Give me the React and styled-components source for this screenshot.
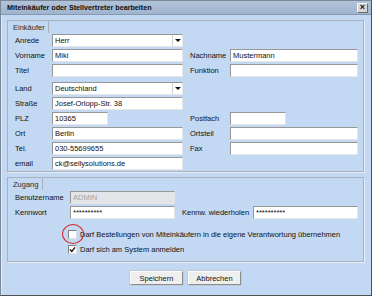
import React from 'react';
import styled, { createGlobalStyle } from 'styled-components';

const GlobalStyle = createGlobalStyle`
  html, body {
    margin: 0;
    padding: 0;
  }
  body {
    font-family: "Liberation Sans", Arial, sans-serif;
    font-size: 7.5px;
    color: #111;
  }
  * {
    box-sizing: border-box;
  }
`;

const Window = styled.div`
  width: 372px;
  height: 296px;
  display: flex;
  flex-direction: column;
  background: #c3d9f3;
  border: 1px solid #7b8796;
  border-right-color: #505050;
  border-bottom-color: #505050;
  box-shadow: inset 1px 0 0 #e2edf9;
`;

const TitleBar = styled.div`
  height: 14px;
  display: flex;
  align-items: center;
  justify-content: space-between;
  padding: 0 3px 0 6px;
  background: linear-gradient(#b1c3d9, #9fb4ce);
  border-bottom: 1px solid #8698b0;
`;

const Title = styled.span`
  font-weight: bold;
  font-size: 7.2px;
  color: #0e0e0e;
`;

const CloseBtn = styled.span`
  width: 11px;
  height: 10px;
  display: flex;
  align-items: center;
  justify-content: center;
  background: #d6d6d6;
  border: 1px solid;
  border-color: #f4f4f4 #6a6a6a #6a6a6a #f4f4f4;
  font-size: 9px;
  line-height: 1;
  font-weight: bold;
  color: #111;
`;

const Body = styled.div`
  flex: 1;
  display: flex;
  flex-direction: column;
  padding: 5px 7px 0 6px;
`;

const Group = styled.div`
  border: 1px solid #a9b2bc;
  box-shadow: 1px 1px 0 #e6eef8;
  padding: 0 5px ${p => p.$padBottom}px 7px;
  & + & {
    margin-top: 5px;
  }
`;

const Legend = styled.div`
  width: ${p => p.$w}px;
  height: 12px;
  line-height: 13px;
  margin: 0 0 1px -7px;
  padding-left: 5px;
  border-right: 1px solid #a9b2bc;
  color: #2a2a2a;
`;

const Stack = styled.div`
  display: flex;
  flex-direction: column;
  gap: 2px;
`;

const Row = styled.div`
  display: grid;
  grid-template-columns: ${p => p.$cols};
  align-items: center;
  height: 13px;
`;

const Spacer = styled.div`
  height: ${p => p.$h}px;
`;

const Label = styled.span`
  color: #111;
  white-space: nowrap;
`;

const Field = styled.input`
  width: ${p => (p.$w ? `${p.$w}px` : '100%')};
  height: 13px;
  margin: 0;
  padding: 0 2px;
  font: inherit;
  color: ${p => (p.disabled ? '#a3a3a3' : '#101010')};
  background: ${p => (p.disabled ? '#e3e5e8' : '#fff')};
  border: 1px solid;
  border-color: #979797 #e6e6e6 #e6e6e6 #979797;
  outline: none;
`;

const SelectBox = styled.div`
  width: ${p => p.$w}px;
  height: 13px;
  display: flex;
  background: #fff;
  border: 1px solid;
  border-color: #979797 #e6e6e6 #e6e6e6 #979797;
`;

const SelectValue = styled.span`
  flex: 1;
  padding-left: 2px;
  line-height: 11px;
  color: #101010;
`;

const Arrow = styled.span`
  width: 10px;
  display: flex;
  align-items: center;
  justify-content: center;
  border-left: 1px solid #cfcfcf;
  &::after {
    content: '';
    border-left: 3px solid transparent;
    border-right: 3px solid transparent;
    border-top: 3px solid #111;
  }
`;

const CheckRow = styled.div`
  height: 10px;
  display: flex;
  align-items: center;
  gap: 3px;
  padding-left: 53px;
`;

const Box = styled.span`
  position: relative;
  width: 9px;
  height: 9px;
  display: flex;
  background: #fff;
  border: 1px solid;
  border-color: #808080 #e0e0e0 #e0e0e0 #808080;
`;

const Ring = styled.span`
  position: absolute;
  left: -7px;
  top: -7px;
  width: 22px;
  height: 20px;
  border: 1px solid #d42a2a;
  border-radius: 50%;
`;

const Buttons = styled.div`
  display: flex;
  justify-content: center;
  gap: 5px;
  margin-top: 9px;
`;

const Button = styled.button`
  width: 53px;
  height: 14px;
  padding: 0;
  font: inherit;
  color: #111;
  background: #efefef;
  border: 1px solid;
  border-color: #fdfdfd #8c8c8c #8c8c8c #fdfdfd;
  box-shadow: 0 0 0 0.5px #b8bec6;
`;

const Select = ({ value, w }) => (
  <SelectBox $w={w}>
    <SelectValue>{value}</SelectValue>
    <Arrow />
  </SelectBox>
);

const Check = ({ checked, marked, children }) => (
  <CheckRow>
    <Box>
      {checked && (
        <svg width="7" height="7" viewBox="0 0 7 7">
          <polyline points="1,3.5 2.8,5.4 6,1.4" fill="none" stroke="#111" strokeWidth="1.4" />
        </svg>
      )}
      {marked && <Ring />}
    </Box>
    <Label>{children}</Label>
  </CheckRow>
);

const COLS = '37px 138px 40px 128px';
const ZCOLS = '55px 112px 71px 105px';

export default function App() {
  return (
    <>
      <GlobalStyle />
      <Window>
        <TitleBar>
          <Title>Miteinkäufer oder Stellvertreter bearbeiten</Title>
          <CloseBtn>×</CloseBtn>
        </TitleBar>
        <Body>
          <Group $padBottom={1}>
            <Legend $w={41}>Einkäufer</Legend>
            <Stack>
              <Row $cols={COLS}>
                <Label>Anrede</Label>
                <Select value="Herr" w={131} />
              </Row>
              <Row $cols={COLS}>
                <Label>Vorname</Label>
                <Field $w={131} readOnly value="Miki" />
                <Label>Nachname</Label>
                <Field readOnly value="Mustermann" />
              </Row>
              <Row $cols={COLS}>
                <Label>Titel</Label>
                <Field $w={131} readOnly value="" />
                <Label>Funktion</Label>
                <Field readOnly value="" />
              </Row>
              <Spacer $h={1} />
              <Row $cols={COLS}>
                <Label>Land</Label>
                <Select value="Deutschland" w={131} />
              </Row>
              <Row $cols={COLS}>
                <Label>Straße</Label>
                <Field $w={131} readOnly value="Josef-Orlopp-Str. 38" />
              </Row>
              <Row $cols={COLS}>
                <Label>PLZ</Label>
                <Field $w={56} readOnly value="10365" />
                <Label>Postfach</Label>
                <Field $w={56} readOnly value="" />
              </Row>
              <Row $cols={COLS}>
                <Label>Ort</Label>
                <Field $w={131} readOnly value="Berlin" />
                <Label>Ortsteil</Label>
                <Field readOnly value="" />
              </Row>
              <Row $cols={COLS}>
                <Label>Tel.</Label>
                <Field $w={131} readOnly value="030-55699655" />
                <Label>Fax</Label>
                <Field readOnly value="" />
              </Row>
              <Row $cols={COLS}>
                <Label>email</Label>
                <Field $w={131} readOnly value="ck@sellysolutions.de" />
              </Row>
            </Stack>
          </Group>
          <Group $padBottom={7}>
            <Legend $w={35}>Zugang</Legend>
            <Stack>
              <Row $cols={ZCOLS}>
                <Label>Benutzername</Label>
                <Field $w={105} disabled value="ADMIN" />
              </Row>
              <Row $cols={ZCOLS}>
                <Label>Kennwort</Label>
                <Field $w={105} readOnly value="**********" />
                <Label>Kennw. wiederholen</Label>
                <Field readOnly value="**********" />
              </Row>
              <Spacer $h={6} />
              <Check marked>
                Darf Bestellungen von Miteinkäufern in die eigene Verantwortung übernehmen
              </Check>
              <Spacer $h={1} />
              <Check checked>Darf sich am System anmelden</Check>
            </Stack>
          </Group>
          <Buttons>
            <Button>Speichern</Button>
            <Button>Abbrechen</Button>
          </Buttons>
        </Body>
      </Window>
    </>
  );
}
